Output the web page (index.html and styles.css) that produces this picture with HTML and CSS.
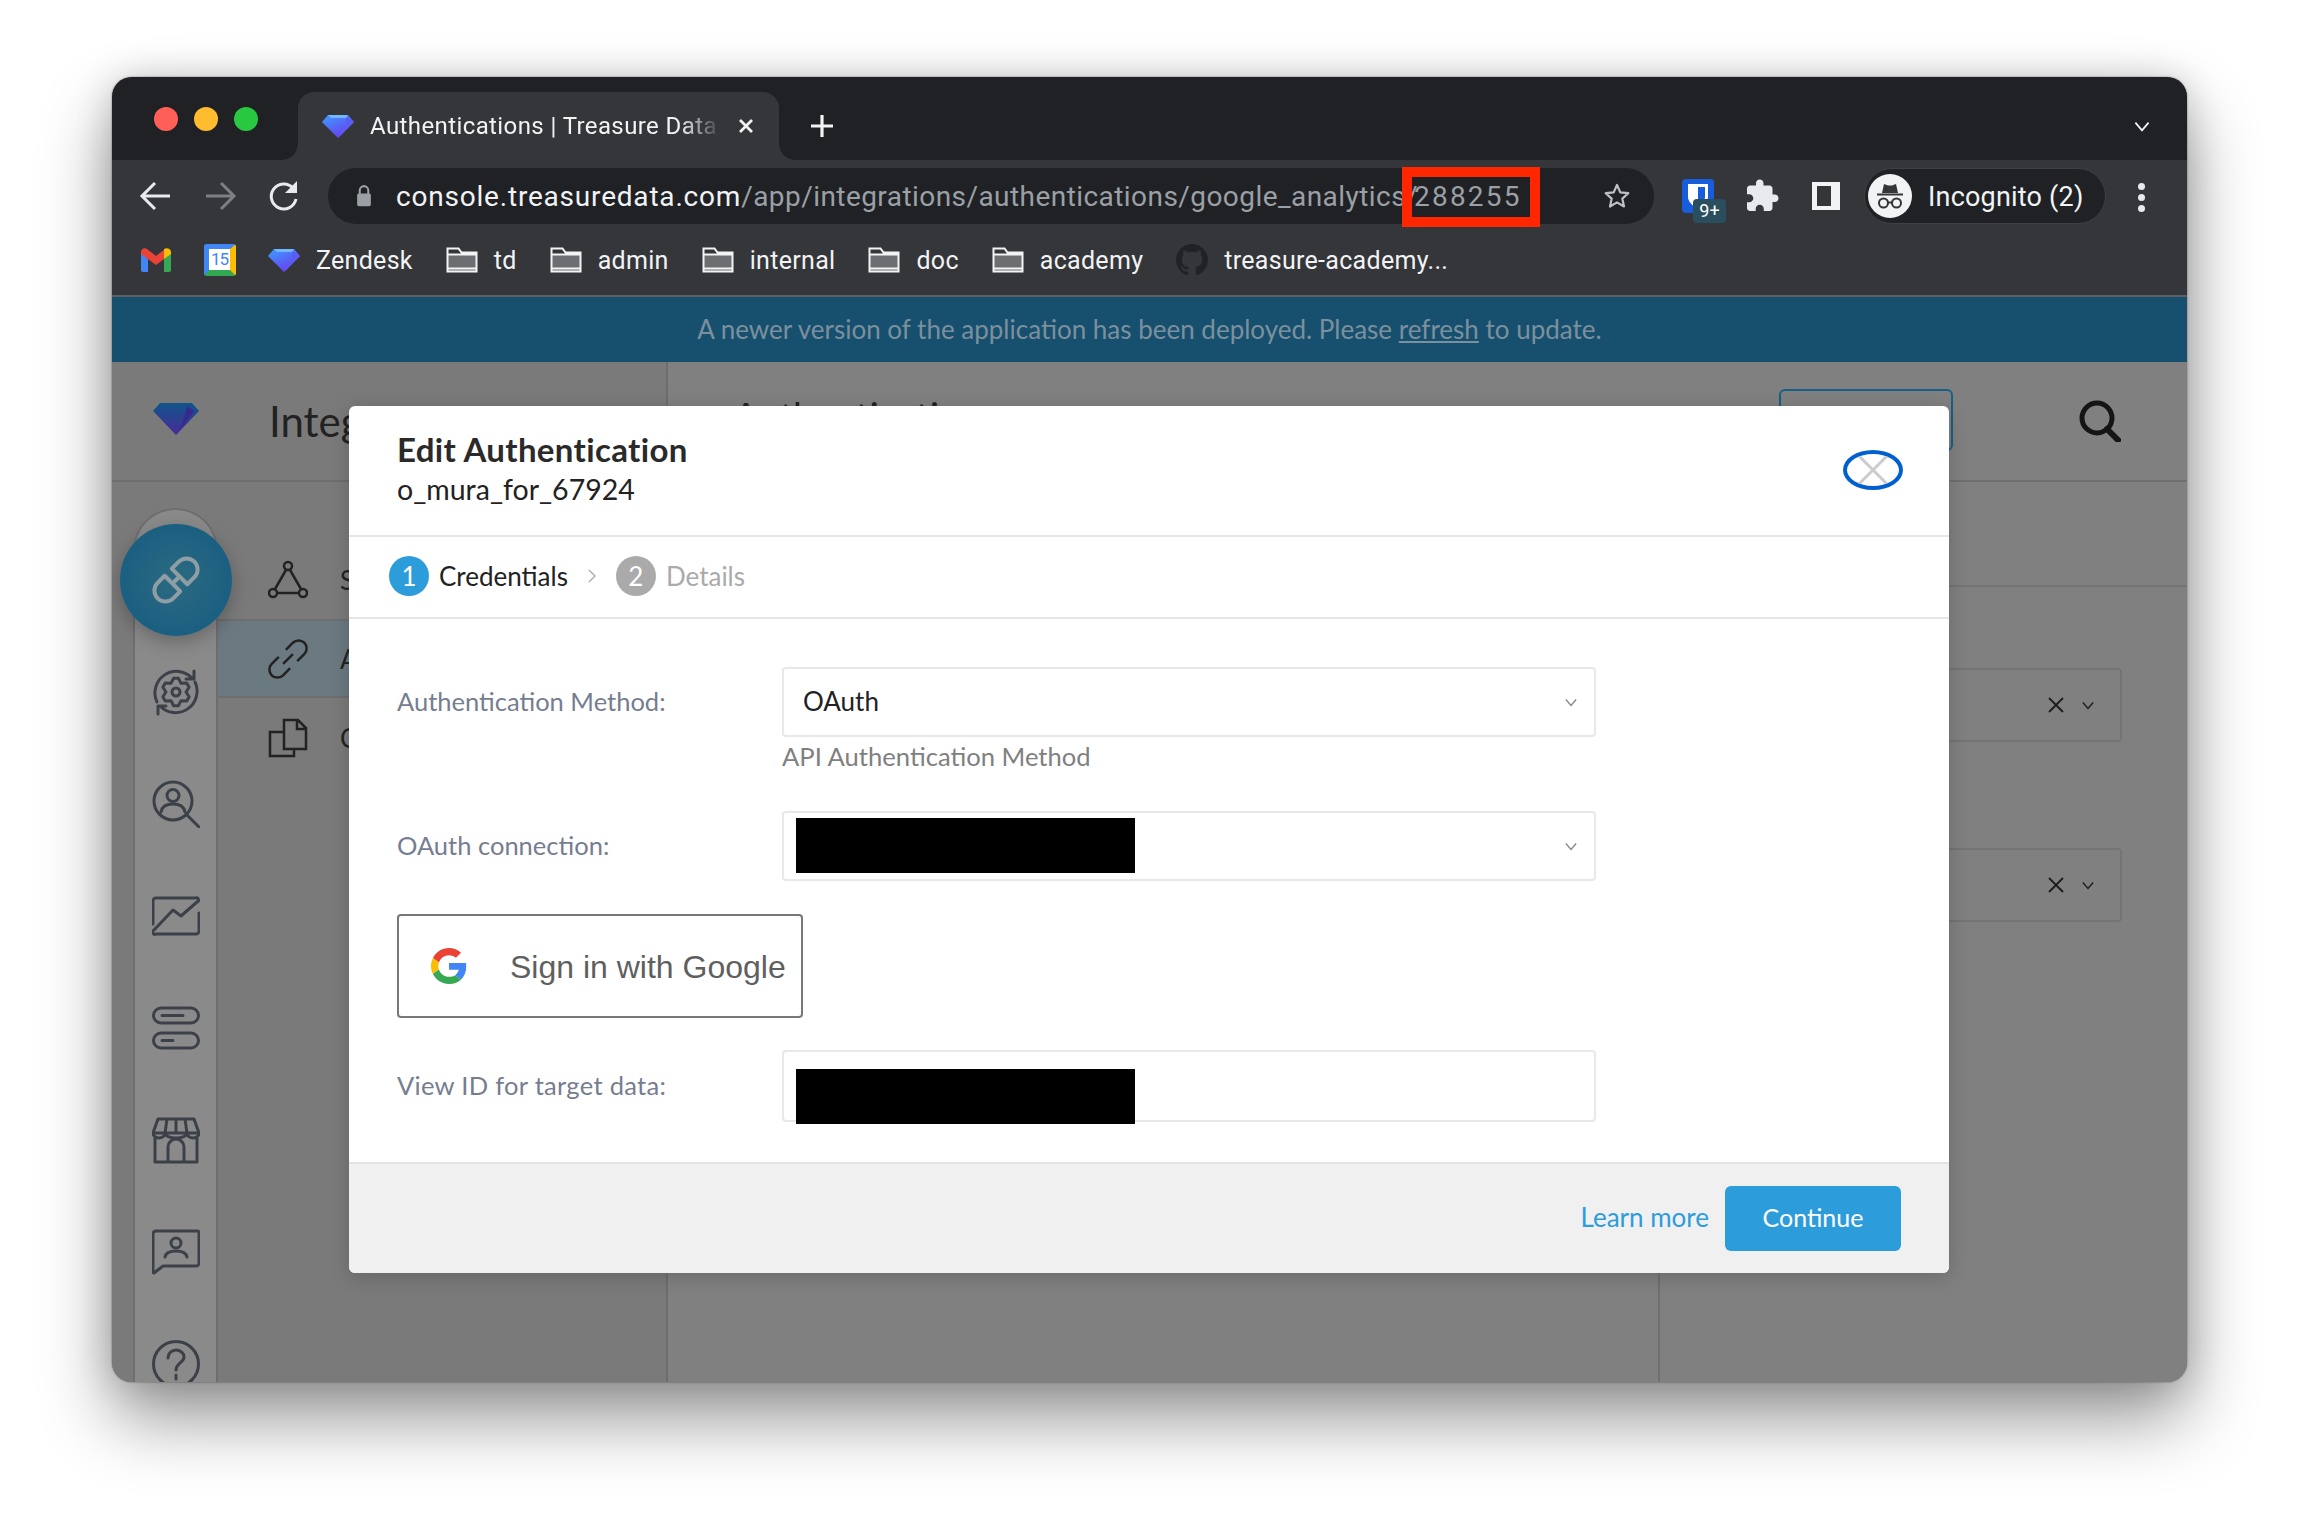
FILE: index.html
```html
<!DOCTYPE html>
<html lang="en">
<head>
    <meta charset="UTF-8">
    <title>Authentications | Treasure Data</title>
    <link rel="stylesheet" href="styles.css">
</head>
<body>

<svg class="defs" width="0" height="0">
    <defs>
        <linearGradient id="gemGrad" x1="0" y1="0" x2="0.6" y2="1">
            <stop offset="0" stop-color="#3aa0ff"/>
            <stop offset="1" stop-color="#6a3df0"/>
        </linearGradient>
        <linearGradient id="gemDim" x1="0" y1="0" x2="0" y2="1">
            <stop offset="0" stop-color="#10558a"/>
            <stop offset="1" stop-color="#4a2a98"/>
        </linearGradient>
        <symbol id="gem" viewBox="0 0 32 23">
            <path d="M6 0h20l6 7-16 16L0 7z" fill="url(#gemGrad)"/>
            <path d="M24 2l8 5-16 16 8-13z" fill="#5b5cf5"/>
            <path d="M6 0h20l-2 3H9z" fill="#73b8ff"/>
        </symbol>
        <symbol id="folder" viewBox="0 0 32 26">
            <path d="M1.5 8h29v16.500h-29z" fill="#6d6e72"/>
            <path d="M1.500 24.500V1.500h11l3 4h15v19zM1.500 7.500h29M1.500 21.500h29" fill="none" stroke="#f1f3f4" stroke-width="2"/>
        </symbol>
        <symbol id="chev" viewBox="0 0 14 10">
            <path d="M1 1.500l6 7 6-7" fill="none" stroke="currentColor" stroke-width="1.600"/>
        </symbol>
    </defs>
</svg>

<div class="window">
    <!-- tab strip -->
    <div class="tabstrip">
        <div class="lights">
            <span class="light red"></span>
            <span class="light yellow"></span>
            <span class="light green"></span>
        </div>
        <div class="tab">
            <svg class="tab-icon"><use href="#gem"/></svg>
            <span class="tab-title">Authentications | Treasure Data</span>
            <svg class="tab-close" viewBox="0 0 16 16"><path d="M2 2l12 12M14 2L2 14" stroke="#f1f3f4" stroke-width="2.800" fill="none"/></svg>
        </div>
        <svg class="new-tab" viewBox="0 0 24 24"><path d="M12 1v22M1 12h22" stroke="#f1f3f4" stroke-width="3.200" fill="none"/></svg>
        <svg class="tab-menu"><use href="#chev"/></svg>
    </div>

    <!-- toolbar -->
    <div class="toolbar">
        <svg class="nav-btn" viewBox="0 0 44 44"><path d="M36 22H9M21 9L8 22l13 13" fill="none" stroke="#e8eaed" stroke-width="3"/></svg>
        <svg class="nav-btn" viewBox="0 0 44 44"><path d="M8 22h27M23 9l13 13-13 13" fill="none" stroke="#7d7f83" stroke-width="3"/></svg>
        <svg class="nav-btn" viewBox="0 0 44 44"><path d="M34 25a12.500 12.500 0 1 1-3-11" fill="none" stroke="#e8eaed" stroke-width="3"/><path d="M35 7v12H23z" fill="#e8eaed"/></svg>
        <div class="address">
            <svg class="lock" viewBox="0 0 20 28"><path d="M5 12V7.500a5 5 0 0 1 10 0V12" fill="none" stroke="#9aa0a6" stroke-width="2.400"/><rect x="2" y="11" width="16" height="15" rx="2" fill="#9aa0a6"/></svg>
            <span class="url"><span class="url-host">console.treasuredata.com</span>/app/integrations/authentications/google_analytics/<span class="url-id">288255</span></span>
            <svg class="star" viewBox="0 0 28 28"><path d="M14 3l3.300 7.400 8 .8-6 5.400 1.700 7.900-7-4.100-7 4.100 1.700-7.900-6-5.400 8-.8z" fill="none" stroke="#bdc1c6" stroke-width="2.200" stroke-linejoin="round"/></svg>
            <div class="highlight"></div>
        </div>
        <div class="ext-bit">
            <svg class="bit-shield" viewBox="0 0 32 34"><rect width="32" height="34" rx="4" fill="#175ddc"/><path d="M6 5h20v13c0 5-5 9-10 12-5-3-10-7-10-12z" fill="#fff"/><path d="M16 8h7v10c0 3-3 6-7 8z" fill="#175ddc"/></svg>
            <span class="bit-badge">9+</span>
        </div>
        <svg class="ext-puzzle" viewBox="0 0 24 24"><path fill="#e8eaed" d="M20.500 11H19V7c0-1.100-.9-2-2-2h-4V3.500C13 2.120 11.880 1 10.500 1S8 2.120 8 3.500V5H4c-1.100 0-1.990.9-1.990 2v3.800H3.500c1.490 0 2.700 1.210 2.700 2.700s-1.210 2.700-2.700 2.700H2V20c0 1.100.9 2 2 2h3.800v-1.500c0-1.490 1.210-2.700 2.700-2.700 1.490 0 2.700 1.210 2.700 2.700V22H17c1.100 0 2-.9 2-2v-4h1.500c1.380 0 2.500-1.120 2.500-2.500S21.880 11 20.500 11z"/></svg>
        <div class="side-panel"></div>
        <div class="profile">
            <svg class="avatar" viewBox="0 0 44 44">
                <circle cx="22" cy="22" r="22" fill="#f1f3f4"/>
                <path d="M14 19l2-9 4 1.500h4l4-1.500 2 9z" fill="#35363a"/>
                <path d="M9 20.500h26" stroke="#35363a" stroke-width="2"/>
                <circle cx="15.500" cy="29" r="4.500" fill="none" stroke="#35363a" stroke-width="2"/>
                <circle cx="28.500" cy="29" r="4.500" fill="none" stroke="#35363a" stroke-width="2"/>
                <path d="M20 28.500h4" stroke="#35363a" stroke-width="2"/>
            </svg>
            <span class="profile-name">Incognito (2)</span>
        </div>
        <div class="dots"><span></span><span></span><span></span></div>
    </div>

    <!-- bookmarks -->
    <div class="bookmarks">
        <svg class="bm-gmail" viewBox="0 0 30 24">
            <path d="M0 4v18a2 2 0 0 0 2 2h5V11z" fill="#4285f4"/>
            <path d="M30 4v18a2 2 0 0 1-2 2h-5V11z" fill="#34a853"/>
            <path d="M0 4c0-3 3-5 6-3l9 7 9-7-1 10-8 6-8-6L0 6z" fill="#ea4335"/>
            <path d="M23 1c3-2 7 0 7 3v2l-7 5z" fill="#fbbc04"/>
        </svg>
        <div class="bm-cal"><span class="bm-cal-day">15</span></div>
        <div class="bm">
            <svg class="bm-gem"><use href="#gem"/></svg>
            <span>Zendesk</span>
        </div>
        <div class="bm"><svg class="bm-folder"><use href="#folder"/></svg><span>td</span></div>
        <div class="bm"><svg class="bm-folder"><use href="#folder"/></svg><span>admin</span></div>
        <div class="bm"><svg class="bm-folder"><use href="#folder"/></svg><span>internal</span></div>
        <div class="bm"><svg class="bm-folder"><use href="#folder"/></svg><span>doc</span></div>
        <div class="bm"><svg class="bm-folder"><use href="#folder"/></svg><span>academy</span></div>
        <div class="bm">
            <svg class="bm-github" viewBox="0 0 16 16"><path fill="#1f2226" d="M8 0C3.580 0 0 3.580 0 8c0 3.540 2.290 6.530 5.470 7.590.4.070.55-.17.55-.38 0-.19-.01-.82-.01-1.490-2.010.37-2.530-.49-2.690-.94-.09-.23-.48-.94-.82-1.130-.28-.15-.68-.52-.01-.53.63-.01 1.080.58 1.230.82.72 1.210 1.870.87 2.330.66.070-.52.28-.87.51-1.070-1.780-.2-3.640-.89-3.640-3.950 0-.87.31-1.590.82-2.150-.08-.2-.36-1.020.08-2.120 0 0 .67-.21 2.200.82.64-.18 1.320-.27 2-.27.68 0 1.360.09 2 .27 1.530-1.040 2.200-.82 2.200-.82.44 1.100.16 1.920.08 2.120.51.56.82 1.270.82 2.150 0 3.070-1.870 3.750-3.650 3.950.29.25.54.73.54 1.480 0 1.070-.01 1.930-.01 2.200 0 .21.15.46.55.38A8.013 8.013 0 0016 8c0-4.420-3.580-8-8-8z"/></svg>
            <span>treasure-academy...</span>
        </div>
    </div>

    <div class="banner">A newer version of the application has been deployed. Please <a class="banner-link">refresh</a> to update.</div>

    <!-- dimmed application -->
    <div class="app">
        <div class="left-col">
            <div class="left-head">
                <svg class="logo" viewBox="0 0 46 32"><path d="M7 0h32l7 8-23 24L0 8z" fill="url(#gemDim)"/><path d="M34 3l7 5-18 24c6-8 9-20 11-29z" fill="#372a8c"/></svg>
                <span class="left-title">Integrations</span>
            </div>
            <div class="left-body">
                <div class="rail">
                    <div class="rail-item rail-active">
                        <div class="rail-circle">
                            <svg class="rail-link" viewBox="-30 -30 60 60"><g transform="rotate(-45)" fill="none" stroke="#8f9ea5" stroke-width="4" stroke-linejoin="round"><path d="M-5-11H-15a11 11 0 0 0 0 22H-5zM5-11H15a11 11 0 0 1 0 22H5zM-5 0H5"/></g></svg>
                        </div>
                    </div>
                    <div class="rail-item">
                        <svg class="rail-icon" viewBox="0 0 48 48">
                            <path d="M5 34A21.500 21.500 0 0 1 40 10M43 14A21.500 21.500 0 0 1 8 38M42 3v8h-8M6 46v-8h8"/>
                            <polygon points="21.570,10.210 26.430,10.210 29,15.340 34.720,15 37.160,19.210 34,24 37.160,28.790 34.720,33 29,32.660 26.430,37.790 21.570,37.790 19,32.660 13.280,33 10.840,28.790 14,24 10.840,19.210 13.280,15 19,15.340"/>
                            <circle cx="24" cy="24" r="4"/>
                        </svg>
                    </div>
                    <div class="rail-item">
                        <svg class="rail-icon" viewBox="0 0 48 48">
                            <circle cx="21" cy="21" r="19"/>
                            <circle cx="21" cy="15.500" r="6"/>
                            <path d="M9 32c1-6 6-8 12-8s11 2 12 8M35 35l12 12"/>
                        </svg>
                    </div>
                    <div class="rail-item">
                        <svg class="rail-icon" viewBox="0 0 48 40">
                            <path d="M1 28V5a3 3 0 0 1 3-3h40a2 2 0 0 1 1 4L29 20l-8-6L2 34a2 2 0 0 0 2 4h40a3 3 0 0 0 3-3V17"/>
                        </svg>
                    </div>
                    <div class="rail-item">
                        <svg class="rail-icon" viewBox="0 0 48 48">
                            <rect x="1.500" y="4" width="45" height="15" rx="7.500"/>
                            <rect x="1.500" y="29" width="45" height="15" rx="7.500"/>
                            <path d="M10 11.500h21M10 36.500h11"/>
                        </svg>
                    </div>
                    <div class="rail-item">
                        <svg class="rail-icon" viewBox="0 0 48 48">
                            <path d="M6 3h36l5 14c0 3-3 5-6 5s-6-2-6-5c0 3-5 5-11 5s-11-2-11-5c0 3-3 5-6 5s-6-2-6-5zM1 17h46M13 17l2-14M35 17L33 3M24 3v14M3 22v24h42V22M16 46V31a8 8 0 0 1 16 0v15"/>
                        </svg>
                    </div>
                    <div class="rail-item">
                        <svg class="rail-icon" viewBox="0 0 48 48">
                            <path d="M1 6a3 3 0 0 1 3-3h41a2 2 0 0 1 2 2v30a3 3 0 0 1-3 3H11l-9 7a1 1 0 0 1-1-1z"/>
                            <circle cx="24" cy="15" r="5"/>
                            <path d="M13 29c1-5 6-6 11-6s10 1 11 6"/>
                        </svg>
                    </div>
                    <div class="rail-item">
                        <svg class="rail-icon" viewBox="0 0 48 48">
                            <circle cx="24" cy="24" r="22.500"/>
                            <path d="M16 18c0-5 4-8 8-8s8 3 8 7c0 6-8 6-8 13M24 35v4"/>
                        </svg>
                    </div>
                </div>
                <ul class="side-nav">
                    <li class="side-item">
                        <svg class="side-icon" viewBox="0 0 40 40"><path d="M18 10L7 29M22 10l11 19M9 33h22"/><circle cx="20" cy="6" r="4"/><circle cx="5" cy="33" r="4"/><circle cx="35" cy="33" r="4"/></svg>
                        <span>Sources</span>
                    </li>
                    <li class="side-item side-selected">
                        <svg class="side-icon" viewBox="-20 -20 40 40"><g transform="rotate(-45)"><path d="M-5-8H-15a8 8 0 0 0 0 16H-5M5-8H15a8 8 0 0 1 0 16H5M-7 0H7"/></g></svg>
                        <span>Authentications</span>
                    </li>
                    <li class="side-item">
                        <svg class="side-icon" viewBox="0 0 40 40"><path d="M16 2h14l8 8v21H16zM29 2v9h9M16 14H2v24h24v-7"/></svg>
                        <span>Catalog</span>
                    </li>
                </ul>
            </div>
        </div>
        <div class="main-col">
            <div class="main-head">
                <h1 class="main-title">Authentications</h1>
                <div class="outline-btn"></div>
                <svg class="search" viewBox="0 0 42 42"><circle cx="18" cy="18" r="15" fill="none" stroke="#151515" stroke-width="5"/><path d="M28 29l11 11" stroke="#151515" stroke-width="6" stroke-linecap="round"/></svg>
            </div>
            <div class="main-sub"></div>
            <div class="main-split">
                <div class="main-list"></div>
                <div class="filters">
                    <div class="filter">
                        <svg class="filter-x" viewBox="0 0 16 16"><path d="M1 1l14 14M15 1L1 15" stroke="#1c1c1c" stroke-width="1.800" fill="none"/></svg>
                        <svg class="filter-chev"><use href="#chev"/></svg>
                    </div>
                    <div class="filter">
                        <svg class="filter-x" viewBox="0 0 16 16"><path d="M1 1l14 14M15 1L1 15" stroke="#1c1c1c" stroke-width="1.800" fill="none"/></svg>
                        <svg class="filter-chev"><use href="#chev"/></svg>
                    </div>
                </div>
            </div>
        </div>

        <!-- modal -->
        <div class="modal">
            <div class="modal-head">
                <div>
                    <h2 class="modal-title">Edit Authentication</h2>
                    <div class="modal-sub">o_mura_for_67924</div>
                </div>
                <div class="modal-close">
                    <svg class="close-x" viewBox="0 0 32 32"><path d="M2 2l28 28M30 2L2 30" stroke="#cccccc" stroke-width="3" fill="none"/></svg>
                </div>
            </div>
            <div class="steps">
                <span class="step-num step-on">1</span>
                <span class="step-label">Credentials</span>
                <svg class="step-arrow" viewBox="0 0 8 14"><path d="M1 1l6 6-6 6" fill="none" stroke="#aaaaaa" stroke-width="1.400"/></svg>
                <span class="step-num step-off">2</span>
                <span class="step-label step-label-off">Details</span>
            </div>
            <div class="modal-body">
                <div class="field">
                    <label class="field-label">Authentication Method:</label>
                    <div class="select">
                        <span class="select-value">OAuth</span>
                        <svg class="select-chev"><use href="#chev"/></svg>
                    </div>
                </div>
                <div class="hint">API Authentication Method</div>
                <div class="field">
                    <label class="field-label">OAuth connection:</label>
                    <div class="select">
                        <div class="redact"></div>
                        <svg class="select-chev"><use href="#chev"/></svg>
                    </div>
                </div>
                <button class="google-btn" type="button">
                    <svg class="google-g" viewBox="0 0 48 48">
                        <path fill="#EA4335" d="M24 9.500c3.540 0 6.710 1.220 9.210 3.600l6.850-6.850C35.900 2.380 30.470 0 24 0 14.620 0 6.510 5.380 2.560 13.220l7.980 6.190C12.430 13.720 17.740 9.500 24 9.500z"/>
                        <path fill="#4285F4" d="M46.980 24.550c0-1.570-.15-3.090-.38-4.550H24v9.020h12.940c-.58 2.960-2.260 5.480-4.780 7.180l7.730 6c4.510-4.180 7.090-10.360 7.090-17.650z"/>
                        <path fill="#FBBC05" d="M10.530 28.590c-.48-1.450-.76-2.990-.76-4.590s.27-3.140.76-4.590l-7.980-6.190C.92 16.460 0 20.120 0 24c0 3.880.92 7.540 2.560 10.780l7.970-6.190z"/>
                        <path fill="#34A853" d="M24 48c6.480 0 11.930-2.130 15.890-5.810l-7.730-6c-2.150 1.450-4.920 2.300-8.160 2.300-6.260 0-11.570-4.220-13.470-9.910l-7.980 6.190C6.510 42.620 14.620 48 24 48z"/>
                    </svg>
                    <span class="google-label">Sign in with Google</span>
                </button>
                <div class="field">
                    <label class="field-label field-label-wide">View ID for target data:</label>
                    <div class="select input-tall">
                        <div class="redact redact-low"></div>
                    </div>
                </div>
            </div>
            <div class="modal-foot">
                <a class="learn-more">Learn more</a>
                <button class="continue-btn" type="button">Continue</button>
            </div>
        </div>
    </div>
</div>

</body>
</html>
```

FILE: styles.css
```css
* {
    box-sizing: border-box;
}
html, body {
    margin: 0;
    height: 100%;
    overflow: hidden;
}
body {
    background-color: #ffffff;
    font-family: 'Lato', 'Open Sans', sans-serif;
    padding: 77px 0 0 112px;
}
.defs {
    position: absolute;
}
.window {
    width: 2075px;
    height: 1305px;
    border-radius: 20px;
    overflow: hidden;
    display: flex;
    flex-direction: column;
    background-color: #808080;
    box-shadow: 0 36px 70px rgba(0, 0, 0, 0.42), 0 0 36px rgba(0, 0, 0, 0.16), 0 0 2px rgba(0, 0, 0, 0.5);
}

/* Tab strip */
.tabstrip {
    height: 83px;
    flex: none;
    background-color: #202124;
    display: flex;
    align-items: flex-end;
}
.lights {
    width: 186px;
    height: 83px;
    flex: none;
    padding: 30px 0 0 42px;
    display: flex;
    gap: 16px;
}
.light {
    width: 24px;
    height: 24px;
    border-radius: 50%;
}
.red { background-color: #ff5f57; }
.yellow { background-color: #febc2e; }
.green { background-color: #28c840; }
.tab {
    width: 481px;
    height: 68px;
    background-color: #35363a;
    border-radius: 16px 16px 0 0;
    display: flex;
    align-items: center;
    padding: 0 24px 0 24px;
    position: relative;
}
.tab::before, .tab::after {
    content: "";
    position: absolute;
    bottom: 0;
    width: 16px;
    height: 16px;
}
.tab::before {
    left: -16px;
    background: radial-gradient(circle at 0 0, #202124 15.500px, #35363a 16px);
}
.tab::after {
    right: -16px;
    background: radial-gradient(circle at 100% 0, #202124 15.500px, #35363a 16px);
}
.tab-icon {
    width: 32px;
    height: 23px;
    flex: none;
    margin-right: 16px;
}
.tab-title {
    width: 352px;
    flex: none;
    font-family: 'Roboto', sans-serif;
    font-size: 24px;
    letter-spacing: 0.4px;
    color: #f1f3f4;
    white-space: nowrap;
    overflow: hidden;
    -webkit-mask-image: linear-gradient(to right, #000 88%, transparent 100%);
    mask-image: linear-gradient(to right, #000 88%, transparent 100%);
}
.tab-close {
    width: 16px;
    height: 16px;
    flex: none;
    margin-left: 16px;
}
.new-tab {
    width: 24px;
    height: 24px;
    flex: none;
    margin: 0 0 22px 31px;
}
.tab-menu {
    width: 16px;
    height: 11px;
    flex: none;
    color: #f1f3f4;
    margin: 0 37px 28px auto;
}

/* Toolbar */
.toolbar {
    height: 68px;
    flex: none;
    background-color: #35363a;
    display: flex;
    align-items: flex-start;
    padding: 8px 0 0 22px;
    gap: 20px;
}
.nav-btn {
    width: 44px;
    height: 44px;
    flex: none;
    margin-top: 6px;
}
.address {
    width: 1326px;
    height: 56px;
    flex: none;
    margin-left: 2px;
    background-color: #202124;
    border-radius: 28px;
    display: flex;
    align-items: center;
    padding: 0 23px 0 26px;
    position: relative;
}
.lock {
    width: 20px;
    height: 24px;
    flex: none;
    margin-right: 22px;
}
.url {
    font-family: 'Roboto', sans-serif;
    font-size: 28px;
    letter-spacing: 0.44px;
    color: #9aa0a6;
    white-space: nowrap;
}
.url-host {
    color: #f1f3f4;
    letter-spacing: 0.8px;
}
.url-id {
    margin-left: -4px;
    letter-spacing: 2.2px;
}
.star {
    width: 28px;
    height: 28px;
    flex: none;
    margin-left: auto;
}
.highlight {
    position: absolute;
    left: 1074px;
    top: -1px;
    width: 138px;
    height: 60px;
    border: 10px solid #ff2600;
}
.ext-bit {
    width: 32px;
    height: 34px;
    flex: none;
    margin: 11px 0 0 8px;
    position: relative;
}
.bit-shield {
    display: block;
    width: 32px;
    height: 34px;
}
.bit-badge {
    position: absolute;
    left: 11px;
    top: 20px;
    width: 33px;
    height: 24px;
    border-radius: 4px;
    background-color: #2b4e5e;
    color: #ffffff;
    font-family: 'Roboto', sans-serif;
    font-size: 18px;
    line-height: 24px;
    text-align: center;
}
.ext-puzzle {
    width: 36px;
    height: 36px;
    flex: none;
    margin: 10px 0 0 10px;
}
.side-panel {
    width: 28px;
    height: 28px;
    flex: none;
    margin: 14px 0 0 12px;
    border-style: solid;
    border-color: #f1f3f4;
    border-width: 4px 9px 4px 5px;
    background-color: #35363a;
}
.profile {
    width: 242px;
    height: 56px;
    flex: none;
    margin-left: 4px;
    border-radius: 28px;
    background-color: #202124;
    border: 1px solid #3f4044;
    display: flex;
    align-items: center;
    padding-left: 3px;
}
.avatar {
    width: 44px;
    height: 44px;
    flex: none;
    margin-right: 16px;
}
.profile-name {
    padding-top: 1px;
    font-family: 'Roboto', sans-serif;
    font-size: 27px;
    letter-spacing: 0.2px;
    color: #f1f3f4;
    white-space: nowrap;
}
.dots {
    flex: none;
    margin: 15px 0 0 12px;
    display: flex;
    flex-direction: column;
    gap: 4px;
}
.dots span {
    width: 7px;
    height: 7px;
    border-radius: 50%;
    background-color: #e8eaed;
}

/* Bookmarks */
.bookmarks {
    height: 69px;
    flex: none;
    background-color: #35363a;
    border-bottom: 2px solid #5f6063;
    display: flex;
    align-items: center;
    padding: 0 0 3px 29px;
    gap: 33px;
    font-family: 'Roboto', sans-serif;
    font-size: 25px;
    letter-spacing: 0.3px;
    color: #f1f3f4;
}
.bm {
    display: flex;
    align-items: center;
    gap: 16px;
}
.bm-gmail {
    width: 30px;
    height: 24px;
    flex: none;
}
.bm-cal {
    width: 32px;
    height: 32px;
    flex: none;
    margin-right: -1px;
    border-radius: 3px;
    background-color: #ffffff;
    border-top: 5px solid #4285f4;
    border-left: 5px solid #4285f4;
    border-right: 6px solid #fbbc04;
    border-bottom: 6px solid #34a853;
    display: flex;
    align-items: center;
    justify-content: center;
}
.bm-cal-day {
    font-family: 'Roboto', sans-serif;
    font-size: 17px;
    line-height: 1;
    color: #4285f4;
    letter-spacing: -1px;
}
.bm-gem {
    width: 32px;
    height: 23px;
    flex: none;
}
.bm-folder {
    width: 32px;
    height: 26px;
    flex: none;
}
.bm-github {
    width: 32px;
    height: 32px;
    flex: none;
}

/* Update banner */
.banner {
    height: 65px;
    flex: none;
    background-color: #174f6e;
    color: #7b909d;
    font-size: 26px;
    line-height: 64px;
    text-align: center;
}
.banner-link {
    text-decoration: underline;
}

/* Dimmed app */
.app {
    flex: 1;
    display: flex;
    position: relative;
    overflow: hidden;
    background-color: #808080;
}
.left-col {
    width: 556px;
    flex: none;
    background-color: #7a7a7a;
    border-right: 2px solid #6e6e6e;
    display: flex;
    flex-direction: column;
}
.left-head {
    height: 120px;
    flex: none;
    border-bottom: 2px solid #6e6e6e;
    display: flex;
    align-items: center;
    padding-left: 41px;
}
.logo {
    width: 46px;
    height: 32px;
    flex: none;
    margin: -5px 70px 0 0;
}
.left-title {
    font-size: 42px;
    color: #222222;
    white-space: nowrap;
}
.left-body {
    flex: 1;
    display: flex;
    align-items: flex-start;
}
.rail {
    width: 85px;
    margin: 26px 0 0 21px;
    flex: none;
    padding-top: 14px;
    background-color: #8a8a8a;
    border: 2px solid #6e6e6e;
    border-bottom: none;
    border-radius: 43px 43px 0 0;
}
.rail-item {
    height: 112px;
    display: flex;
    align-items: center;
    justify-content: center;
}
.rail-active {
    position: relative;
}
.rail-circle {
    position: absolute;
    left: -15px;
    top: 0;
    width: 112px;
    height: 112px;
    border-radius: 50%;
    background: radial-gradient(circle, #2c6a80 0%, #135a82 100%);
    box-shadow: 0 6px 18px rgba(0, 0, 0, 0.25);
    display: flex;
    align-items: center;
    justify-content: center;
}
.rail-link {
    width: 60px;
    height: 60px;
}
.rail-icon {
    width: 48px;
    height: 48px;
    fill: none;
    stroke: #3c4048;
    stroke-width: 3;
    stroke-linejoin: round;
    stroke-linecap: round;
}
.side-nav {
    list-style: none;
    margin: 58px 0 0 0;
    padding: 0;
    flex: 1;
}
.side-item {
    height: 79px;
    display: flex;
    align-items: center;
    gap: 32px;
    padding-left: 50px;
    font-size: 26px;
    color: #222222;
    border-top: 2px solid transparent;
    border-bottom: 2px solid transparent;
}
.side-selected {
    background-color: #6b7980;
    border-color: #6e6e6e;
}
.side-icon {
    width: 40px;
    height: 40px;
    flex: none;
    fill: none;
    stroke: #222222;
    stroke-width: 2.500;
}
.main-col {
    flex: 1;
    display: flex;
    flex-direction: column;
}
.main-head {
    height: 120px;
    flex: none;
    border-bottom: 2px solid #6f6f6f;
    display: flex;
    align-items: center;
    padding-left: 65px;
}
.main-title {
    margin: -10px 0 0 0;
    font-size: 38px;
    font-weight: 400;
    color: #222222;
}
.outline-btn {
    width: 174px;
    height: 62px;
    margin: -2px 0 0 auto;
    border: 2px solid #1a5f85;
    border-radius: 6px;
}
.search {
    width: 42px;
    height: 42px;
    flex: none;
    margin: 0 66px 0 126px;
}
.main-sub {
    height: 105px;
    flex: none;
    border-bottom: 2px solid #747474;
}
.main-split {
    flex: 1;
    display: flex;
}
.main-list {
    width: 992px;
    flex: none;
    border-right: 2px solid #6f6f6f;
}
.filters {
    flex: 1;
    padding: 81px 65px 0 0;
    display: flex;
    flex-direction: column;
    gap: 106px;
}
.filter {
    height: 74px;
    border: 2px solid #747474;
    border-radius: 4px;
    display: flex;
    align-items: center;
    justify-content: flex-end;
    gap: 18px;
    padding-right: 26px;
}
.filter-x {
    width: 16px;
    height: 16px;
}
.filter-chev {
    width: 12px;
    height: 9px;
    color: #1c1c1c;
}

/* Modal */
.modal {
    position: absolute;
    left: 237px;
    top: 44px;
    width: 1600px;
    height: 867px;
    background-color: #ffffff;
    border-radius: 6px;
    box-shadow: 0 4px 20px rgba(0, 0, 0, 0.18);
    display: flex;
    flex-direction: column;
    overflow: hidden;
}
.modal-head {
    height: 131px;
    flex: none;
    border-bottom: 2px solid #e6e6e6;
    display: flex;
    align-items: flex-start;
    justify-content: space-between;
    padding: 25px 46px 0 48px;
}
.modal-title {
    margin: 0;
    font-size: 33px;
    font-weight: 700;
    letter-spacing: 0.35px;
    line-height: 36px;
    color: #2a2a2a;
}
.modal-sub {
    margin-top: 4px;
    font-size: 28.500px;
    line-height: 36px;
    color: #222222;
}
.modal-close {
    width: 60px;
    height: 40px;
    margin-top: 19px;
    border: 4px solid #0060d0;
    border-radius: 50%;
    display: flex;
    align-items: center;
    justify-content: center;
    overflow: hidden;
}
.close-x {
    width: 32px;
    height: 32px;
}
.steps {
    height: 82px;
    flex: none;
    border-bottom: 2px solid #e6e6e6;
    display: flex;
    align-items: center;
    padding: 0 0 3px 40px;
    font-size: 26px;
}
.step-num {
    width: 40px;
    height: 40px;
    border-radius: 50%;
    color: #ffffff;
    text-align: center;
    line-height: 40px;
    flex: none;
}
.step-on {
    background-color: #2d9cdb;
}
.step-off {
    background-color: #aaaaaa;
}
.step-label {
    margin-left: 10px;
    color: #222222;
}
.step-label-off {
    color: #aaaaaa;
}
.step-arrow {
    width: 8px;
    height: 14px;
    flex: none;
    margin: 0 20px 0 20px;
}
.modal-body {
    flex: 1;
    padding: 48px 48px 0;
}
.field {
    display: flex;
    align-items: center;
}
.field-label {
    width: 385px;
    flex: none;
    padding-bottom: 3px;
    font-size: 25.500px;
    color: #767d90;
}
.field-label-wide {
    letter-spacing: 0.3px;
}
.select {
    width: 814px;
    height: 70px;
    flex: none;
    border: 2px solid #e8e8e8;
    border-radius: 4px;
    display: flex;
    align-items: center;
    padding-left: 19px;
    position: relative;
}
.input-tall {
    height: 72px;
}
.select-value {
    font-size: 26px;
    padding-bottom: 3px;
    color: #222222;
}
.select-chev {
    width: 12px;
    height: 9px;
    margin: 0 17px 0 auto;
    color: #888888;
}
.redact {
    position: absolute;
    left: 12px;
    top: 5px;
    width: 339px;
    height: 55px;
    background-color: #000000;
}
.redact-low {
    top: 17px;
}
.hint {
    height: 74px;
    padding: 3px 0 0 385px;
    font-size: 25.600px;
    line-height: 32px;
    color: #808080;
}
.google-btn {
    width: 406px;
    height: 104px;
    margin: 33px 0 32px 0;
    display: flex;
    align-items: center;
    padding: 0 0 0 32px;
    background-color: #ffffff;
    border: 2px solid #777777;
    border-radius: 4px;
    font-family: 'Liberation Sans', Arial, sans-serif;
    font-size: 32px;
    color: #5f5f5f;
}
.google-label {
    padding-top: 2px;
}
.google-g {
    width: 36px;
    height: 36px;
    flex: none;
    margin-right: 43px;
}
.modal-foot {
    height: 111px;
    flex: none;
    background-color: #f0f0f0;
    border-top: 2px solid #e3e3e3;
    display: flex;
    align-items: center;
    justify-content: flex-end;
    padding-right: 48px;
    gap: 16px;
}
.learn-more {
    font-size: 26px;
    padding-bottom: 3px;
    color: #2d9cdb;
}
.continue-btn {
    width: 176px;
    height: 65px;
    border: none;
    border-radius: 6px;
    padding-bottom: 5px;
    background-color: #2d9cdb;
    color: #ffffff;
    font-family: 'Lato', 'Open Sans', sans-serif;
    font-size: 25px;
}
```
